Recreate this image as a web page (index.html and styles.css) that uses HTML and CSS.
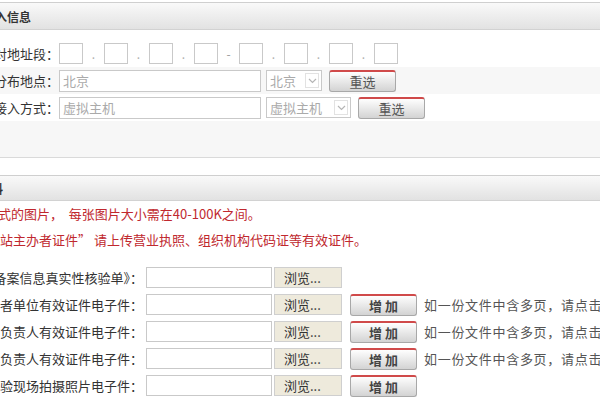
FILE: index.html
```html
<!DOCTYPE html>
<html lang="zh-CN">
<head>
<meta charset="utf-8">
<title>备案信息</title>
<link rel="stylesheet" href="styles.css">
</head>
<body>
<div class="page">
  <section class="sec sec1">
    <div class="bar bar1"><span class="bar-title">接入信息</span></div>
    <div class="rows">
      <div class="row">
        <span class="lbl">核对地址段：</span>
        <input class="oct"><span class="sep">.</span>
        <input class="oct"><span class="sep">.</span>
        <input class="oct"><span class="sep">.</span>
        <input class="oct"><span class="sep dash">-</span>
        <input class="oct"><span class="sep">.</span>
        <input class="oct"><span class="sep">.</span>
        <input class="oct"><span class="sep">.</span>
        <input class="oct">
      </div>
      <div class="row alt">
        <span class="lbl">服务器分布地点：</span>
        <input class="txt" value="北京">
        <div class="sel sel-s"><span class="sel-text">北京</span><span class="sel-arrow"><svg width="9" height="6" viewBox="0 0 9 6"><path d="M1 1 L4.5 4.5 L8 1" fill="none" stroke="#b5b5b5" stroke-width="1.2"/></svg></span></div>
        <button class="btn btn-redo">重选</button>
      </div>
      <div class="row">
        <span class="lbl">网站接入方式：</span>
        <input class="txt" value="虚拟主机">
        <div class="sel sel-l"><span class="sel-text">虚拟主机</span><span class="sel-arrow"><svg width="9" height="6" viewBox="0 0 9 6"><path d="M1 1 L4.5 4.5 L8 1" fill="none" stroke="#b5b5b5" stroke-width="1.2"/></svg></span></div>
        <button class="btn btn-redo">重选</button>
      </div>
      <div class="row alt spacer"></div>
    </div>
  </section>

  <section class="sec sec2">
    <div class="bar bar2"><span class="bar-title">上传资料</span></div>
    <div class="notes">
      <p class="note n1">请上传标准格式的图片，&nbsp;&nbsp;每张图片大小需在40-100K之间。</p>
      <p class="note n2">“网站主办者证件” 请上传营业执照、组织机构代码证等有效证件。</p>
    </div>
    <div class="files">
      <div class="frow">
        <span class="flbl">《网站备案信息真实性核验单》：</span>
        <input class="file">
        <button class="browse">浏览...</button>
      </div>
      <div class="frow">
        <span class="flbl">网站主办者单位有效证件电子件：</span>
        <input class="file">
        <button class="browse">浏览...</button>
        <button class="btn btn-add">增 加</button>
        <span class="hint">如一份文件中含多页，请点击增加</span>
      </div>
      <div class="frow">
        <span class="flbl">网站负责人有效证件电子件：</span>
        <input class="file">
        <button class="browse">浏览...</button>
        <button class="btn btn-add">增 加</button>
        <span class="hint">如一份文件中含多页，请点击增加</span>
      </div>
      <div class="frow">
        <span class="flbl">主体负责人有效证件电子件：</span>
        <input class="file">
        <button class="browse">浏览...</button>
        <button class="btn btn-add">增 加</button>
        <span class="hint">如一份文件中含多页，请点击增加</span>
      </div>
      <div class="frow">
        <span class="flbl">网站核验现场拍摄照片电子件：</span>
        <input class="file">
        <button class="browse">浏览...</button>
        <button class="btn btn-add">增 加</button>
      </div>
    </div>
  </section>
</div>
</body>
</html>
```

FILE: styles.css
```css
html, body {
  margin: 0;
  padding: 0;
  overflow: hidden;
  background: #fff;
}
body {
  width: 600px;
  height: 400px;
  font-family: "Noto Sans CJK SC", "Liberation Sans", sans-serif;
  font-size: 13px;
  color: #333;
}
.page {
  margin-left: -100px;
  width: 800px;
}
input, button {
  font: inherit;
  margin: 0;
  box-sizing: border-box;
}

/* section headers */
.bar {
  display: flex;
  align-items: center;
  border-top: 1px solid #cfcfcf;
  border-bottom: 1px solid #d2d2d2;
  background: linear-gradient(#f9f9f9, #e2e2e2);
}
.bar1 {
  margin-top: 2px;
  height: 26px;
  padding-left: 83px;
}
.bar2 {
  margin-top: 17px;
  height: 24px;
  padding-left: 55px;
}
.bar-title {
  font-size: 12px;
  font-weight: bold;
  color: #333;
}

/* section 1 rows */
.rows {
  padding-top: 10px;
  border-bottom: 1px solid #dadada;
}
.row {
  display: flex;
  align-items: center;
  height: 27px;
}
.row.alt {
  background: #f7f7f7;
}
.row.spacer {
  height: 36px;
}
.lbl {
  flex: none;
  width: 159px;
  text-align: right;
  white-space: nowrap;
  color: #333;
}
.oct {
  flex: none;
  width: 24px;
  height: 21px;
  border: 1px solid #c9c9c9;
  padding: 0;
  background: #fff;
}
.sep {
  flex: none;
  width: 21px;
  text-align: center;
  color: #b0b0b0;
  font-size: 12px;
}
.sep.dash {
  color: #999;
}
.txt {
  flex: none;
  width: 202px;
  height: 22px;
  border: 1px solid #c9c9c9;
  padding: 0 3px;
  color: #aaa;
  background: #fff;
}
.sel {
  flex: none;
  display: flex;
  align-items: center;
  height: 21px;
  margin-left: 5px;
  padding-left: 3px;
  border: 1px solid #c9c9c9;
  box-sizing: border-box;
  background: #fff;
  color: #aaa;
}
.sel-s { width: 56px; }
.sel-l { width: 85px; }
.sel-arrow {
  display: flex;
  align-items: center;
  justify-content: center;
  width: 14px;
  height: 15px;
  margin-left: auto;
  margin-right: 2px;
  border: 1px solid #e2e2e2;
  box-sizing: border-box;
}

/* buttons */
.btn {
  flex: none;
  height: 22px;
  padding: 0;
  border: 1px solid #a8a8a8;
  border-top: 2px solid #d04a4a;
  border-radius: 3px;
  background: linear-gradient(#fefefe, #d3d3d3);
  color: #444;
}
.btn-redo {
  width: 67px;
  margin-left: 7px;
  color: #555;
}
.btn-add {
  width: 67px;
  margin-left: 8px;
  font-weight: bold;
  color: #444;
}

/* section 2 */
.notes {
  color: #c0282e;
  font-size: 13px;
}
.note {
  margin: 0;
  height: 26px;
  line-height: 26px;
  white-space: nowrap;
}
.n1 { padding-left: 20px; }
.n2 { padding-left: 74px; }
.files {
  padding-top: 11px;
}
.frow {
  display: flex;
  align-items: center;
  height: 27px;
}
.flbl {
  flex: none;
  width: 243px;
  margin-right: 3px;
  text-align: right;
  white-space: nowrap;
  color: #333;
}
.file {
  flex: none;
  width: 126px;
  height: 21px;
  border: 1px solid #c9c9c9;
  padding: 0;
  background: #fff;
}
.browse {
  flex: none;
  width: 68px;
  height: 21px;
  margin-left: 2px;
  padding: 0 0 0 9px;
  text-align: left;
  border: 1px solid #cfcfcf;
  background: #eeeadc;
  color: #333;
}
.hint {
  flex: none;
  margin-left: 7px;
  white-space: nowrap;
  letter-spacing: 0.7px;
  color: #555;
}
```
